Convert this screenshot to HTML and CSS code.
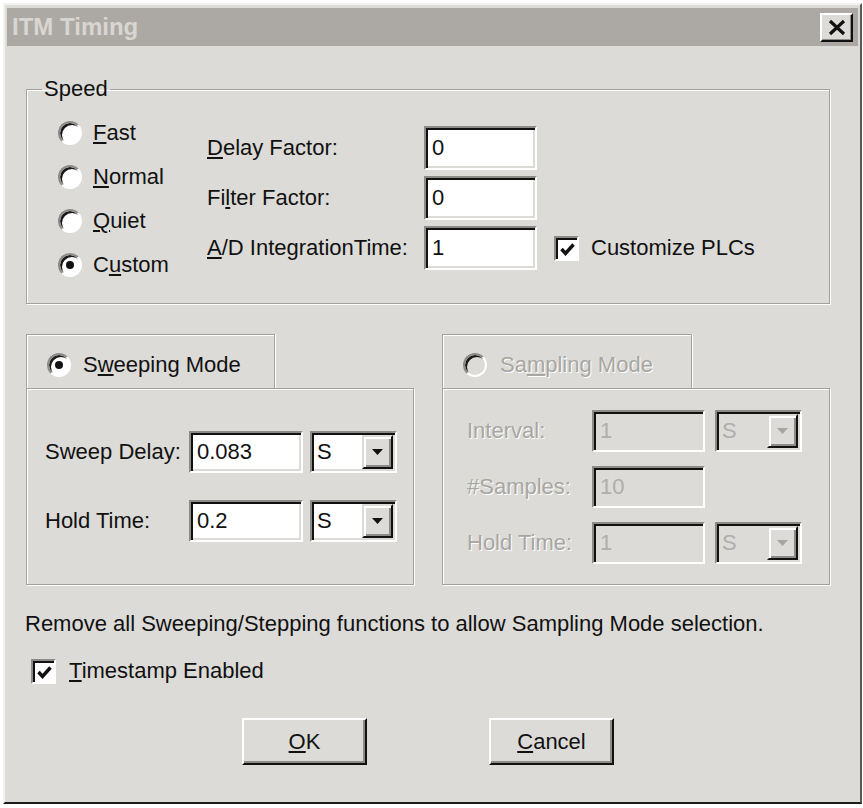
FILE: index.html
```html
<!DOCTYPE html>
<html lang="en">
<head>
<meta charset="utf-8">
<title>ITM Timing</title>
<link rel="stylesheet" href="styles.css">
</head>
<body>
<div class="dialog">
  <div class="titlebar">
    <span class="title">ITM Timing</span>
    <span class="close"><svg width="18" height="17" viewBox="0 0 18 17"><path d="M2 2 L16 15 M16 2 L2 15" stroke="#111" stroke-width="3.2" fill="none"/></svg></span>
  </div>
  <div class="body">
    <fieldset class="group">
      <legend>Speed</legend>
      <div class="speed-inner">
        <div class="radios">
          <div class="opt"><span class="radio"></span><span><u>F</u>ast</span></div>
          <div class="opt"><span class="radio"></span><span><u>N</u>ormal</span></div>
          <div class="opt"><span class="radio"></span><span><u>Q</u>uiet</span></div>
          <div class="opt"><span class="radio on"></span><span>C<u>u</u>stom</span></div>
        </div>
        <div class="fields">
          <span class="r1"><u>D</u>elay Factor:</span>
          <span class="edit r1">0</span>
          <span class="r2">Fi<u>l</u>ter Factor:</span>
          <span class="edit r2">0</span>
          <span class="r3"><u>A</u>/D IntegrationTime:</span>
          <span class="edit r3">1</span>
          <span class="check r3 c3"><span class="box"><svg width="15" height="13" viewBox="0 0 15 13"><path d="M1.5 6 L5.5 10.5 L13.5 1.5" stroke="#111" stroke-width="3.4" fill="none"/></svg></span><span>Customize PLCs</span></span>
        </div>
      </div>
    </fieldset>

    <div class="modes">
      <div class="mode">
        <div class="tab"><span class="radio on"></span><span>S<u>w</u>eeping Mode</span></div>
        <div class="panel sweep">
          <div class="row">
            <span class="lbl">Sweep Delay:</span>
            <span class="edit sm">0.083</span>
            <span class="combo"><span class="val">S</span><span class="drop"><svg width="11" height="6" viewBox="0 0 11 6"><path d="M0 0 H11 L5.5 6 Z" fill="#111"/></svg></span></span>
          </div>
          <div class="row">
            <span class="lbl">Hold Time:</span>
            <span class="edit sm">0.2</span>
            <span class="combo"><span class="val">S</span><span class="drop"><svg width="11" height="6" viewBox="0 0 11 6"><path d="M0 0 H11 L5.5 6 Z" fill="#111"/></svg></span></span>
          </div>
        </div>
      </div>
      <div class="mode">
        <div class="tab sampling off"><span class="radio dis"></span><span>Sa<u>m</u>pling Mode</span></div>
        <div class="panel sample off">
          <div class="row">
            <span class="lbl">Interval:</span>
            <span class="edit sm dis">1</span>
            <span class="combo dis"><span class="val">S</span><span class="drop"><svg width="11" height="6" viewBox="0 0 11 6"><path d="M0 0 H11 L5.5 6 Z" fill="#a8a6a2"/></svg></span></span>
          </div>
          <div class="row">
            <span class="lbl">#Samples:</span>
            <span class="edit sm dis">10</span>
          </div>
          <div class="row">
            <span class="lbl">Hold Time:</span>
            <span class="edit sm dis">1</span>
            <span class="combo dis"><span class="val">S</span><span class="drop"><svg width="11" height="6" viewBox="0 0 11 6"><path d="M0 0 H11 L5.5 6 Z" fill="#a8a6a2"/></svg></span></span>
          </div>
        </div>
      </div>
    </div>

    <p class="note">Remove all Sweeping/Stepping functions to allow Sampling Mode selection.</p>

    <div class="check ts"><span class="box"><svg width="15" height="13" viewBox="0 0 15 13"><path d="M1.5 6 L5.5 10.5 L13.5 1.5" stroke="#111" stroke-width="3.4" fill="none"/></svg></span><span><u>T</u>imestamp Enabled</span></div>

    <div class="buttons">
      <span class="btn"><span><u>O</u>K</span></span>
      <span class="btn"><span><u>C</u>ancel</span></span>
    </div>
  </div>
</div>
</body>
</html>
```
FILE: styles.css
```css
body {
  margin: 0;
  background: #ffffff;
  font-family: "Liberation Sans", Arial, sans-serif;
  font-size: 22px;
  line-height: 24px;
  color: #111111;
}

u {
  text-decoration: underline;
  text-decoration-thickness: 2px;
  text-underline-offset: 2px;
}

.dialog {
  box-sizing: border-box;
  width: 859px;
  height: 801px;
  margin: 3px 0 0 3px;
  padding: 3px 2px 0 2px;
  background: #dcdbd7;
  border: 2px solid;
  border-color: #f3f2ef #5a5956 #1c1c1c #f3f2ef;
}

.titlebar {
  height: 38px;
  background: #aca9a5;
  display: flex;
  align-items: center;
  justify-content: space-between;
  padding: 0 5px;
}

.title {
  font-weight: bold;
  font-size: 24px;
  color: #d9d6d2;
}

.close {
  box-sizing: border-box;
  width: 33px;
  height: 29px;
  border: 2px solid;
  border-color: #ffffff #111111 #111111 #ffffff;
  box-shadow: inset -1px -1px #8d8b87;
  background: #dcdbd7;
  display: flex;
  align-items: center;
  justify-content: center;
}

.body {
  padding: 31px 28px 0 19px;
}

.group {
  margin: 0;
  padding: 0;
  min-inline-size: auto;
  border: 1px solid #a3a19d;
  box-shadow: inset 1px 1px #ffffff, 1px 1px #ffffff;
}

.group legend {
  margin-left: 15px;
  padding: 0 2px;
  line-height: 24px;
}

.speed-inner {
  display: flex;
  padding: 10px 0 16px 31px;
}

.radios {
  width: 149px;
  display: flex;
  flex-direction: column;
}

.opt {
  height: 44px;
  display: flex;
  align-items: center;
  gap: 11px;
}

.radio {
  box-sizing: border-box;
  width: 24px;
  height: 24px;
  flex: none;
  border-radius: 50%;
  border: 2px solid;
  border-color: #8d8b87 #ffffff #ffffff #8d8b87;
  background: #ffffff;
  box-shadow: inset 2px 2px 0 #1a1a1a;
  display: flex;
  align-items: center;
  justify-content: center;
}

.radio.on::after {
  content: "";
  width: 8px;
  height: 8px;
  border-radius: 50%;
  background: #111111;
}

.radio.dis {
  background: #dcdbd7;
}

.fields {
  display: grid;
  grid-template-columns: 217px 113px auto;
  grid-auto-rows: 50px;
  align-items: center;
  margin-top: 12px;
}

.fields .r1 { grid-row: 1; }
.fields .r2 { grid-row: 2; }
.fields .r3 { grid-row: 3; }
.fields .c3 { grid-column: 3; margin-left: 17px; }

.edit {
  box-sizing: border-box;
  height: 44px;
  border: 2px solid;
  border-color: #8d8b87 #ffffff #ffffff #8d8b87;
  box-shadow: inset 2px 2px #111111, inset -2px -2px #dcdbd7;
  background: #ffffff;
  padding: 0 6px;
  display: flex;
  align-items: center;
}

.edit.sm {
  height: 42px;
}

.check {
  display: flex;
  align-items: center;
  gap: 12px;
}

.box {
  box-sizing: border-box;
  width: 25px;
  height: 25px;
  flex: none;
  border: 2px solid;
  border-color: #8d8b87 #ffffff #ffffff #8d8b87;
  box-shadow: inset 2px 2px #111111;
  background: #ffffff;
  display: flex;
  align-items: center;
  justify-content: center;
  padding: 2px 0 0 2px;
}

.modes {
  display: grid;
  grid-template-columns: 388px 388px;
  column-gap: 28px;
  margin-top: 30px;
}

.tab {
  box-sizing: border-box;
  width: 249px;
  height: 54px;
  border: 1px solid #a3a19d;
  border-bottom: 0;
  box-shadow: inset 1px 1px #ffffff, 1px 0 #ffffff;
  display: flex;
  align-items: center;
  gap: 12px;
  padding: 6px 0 0 20px;
}

.tab.sampling {
  width: 250px;
  gap: 13px;
}

.panel {
  box-sizing: border-box;
  height: 197px;
  border: 1px solid #a3a19d;
  box-shadow: inset 1px 1px #ffffff, 1px 1px #ffffff;
  display: flex;
  flex-direction: column;
}

.panel.sweep {
  padding: 42px 0 0 18px;
  gap: 27px;
}

.panel.sample {
  padding: 21px 0 0 24px;
  gap: 14px;
}

.row {
  height: 42px;
  display: flex;
  align-items: center;
}

.sweep .lbl { width: 144px; }
.sweep .edit { width: 114px; }
.sweep .combo { margin-left: 7px; }

.sample .lbl { width: 125px; }
.sample .edit { width: 113px; }
.sample .combo { margin-left: 10px; }

.off {
  color: #a8a6a2;
  text-shadow: 1px 1px 0 #ffffff;
}

.edit.dis {
  background: #dcdbd7;
  color: #b0aeaa;
  text-shadow: none;
}

.combo {
  box-sizing: border-box;
  width: 87px;
  height: 42px;
  border: 2px solid;
  border-color: #8d8b87 #ffffff #ffffff #8d8b87;
  box-shadow: inset 2px 2px #111111, inset -2px -2px #dcdbd7;
  background: #ffffff;
  padding: 2px;
  display: flex;
  align-items: stretch;
  justify-content: space-between;
}

.combo .val {
  padding-left: 3px;
  display: flex;
  align-items: center;
}

.combo.dis {
  background: #dcdbd7;
  color: #b0aeaa;
  text-shadow: none;
}

.drop {
  box-sizing: border-box;
  width: 31px;
  border: 2px solid;
  border-color: #dcdbd7 #111111 #111111 #dcdbd7;
  box-shadow: inset 2px 2px #ffffff, inset -2px -2px #8d8b87;
  background: #dcdbd7;
  display: flex;
  align-items: center;
  justify-content: center;
}

.note {
  margin: 27px 0 0 -1px;
}

.ts {
  margin: 22px 0 0 5px;
  height: 26px;
  gap: 13px;
}

.buttons {
  display: flex;
  justify-content: center;
  gap: 122px;
  margin-top: 34px;
}

.btn {
  box-sizing: border-box;
  width: 125px;
  height: 47px;
  border: 2px solid;
  border-color: #ffffff #111111 #111111 #ffffff;
  box-shadow: inset -2px -2px #8d8b87;
  background: #dcdbd7;
  display: flex;
  align-items: center;
  justify-content: center;
}
```
